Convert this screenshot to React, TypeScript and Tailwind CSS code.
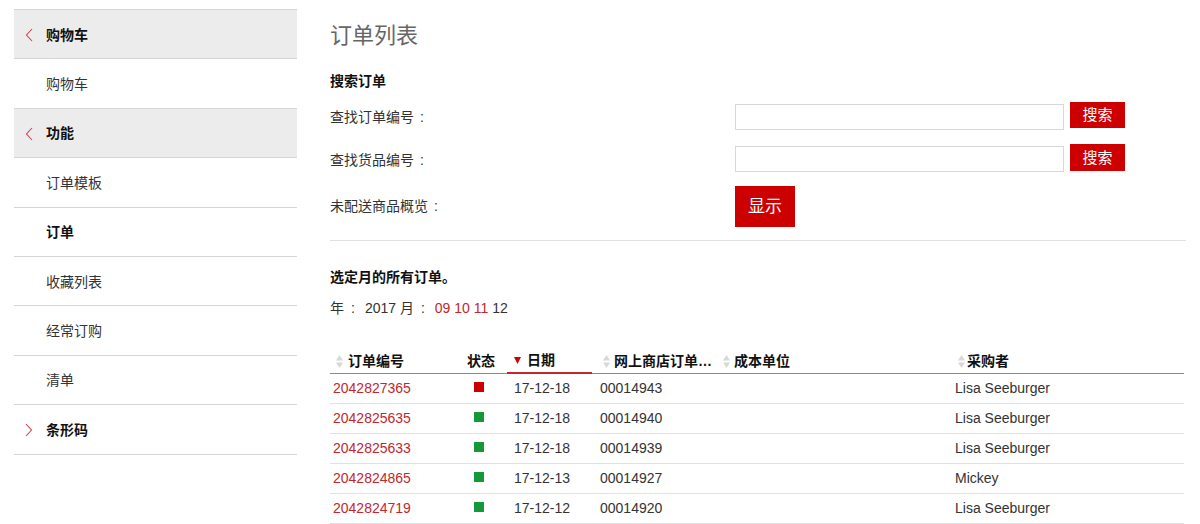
import React from "react";

const font = { fontFamily: '"Liberation Sans", Arial, "Noto Sans CJK SC", sans-serif' };

function Chevron({ dir }: { dir: "left" | "right" }) {
  return (
    <svg width="8" height="14" viewBox="0 0 8 14" className="shrink-0">
      {dir === "left" ? (
        <polyline points="7,1 1.5,7 7,13" fill="none" stroke="#c9444a" strokeWidth="1.1" />
      ) : (
        <polyline points="1,1 6.5,7 1,13" fill="none" stroke="#c9444a" strokeWidth="1.1" />
      )}
    </svg>
  );
}

function SortIcon() {
  return (
    <svg width="7" height="15" viewBox="0 0 7 15" className="shrink-0">
      <polygon points="3.5,1 7,6.5 0,6.5" fill="#d8d8d8" />
      <polygon points="0,8.5 7,8.5 3.5,14" fill="#d8d8d8" />
    </svg>
  );
}

function Colon() {
  return <span className="inline-block ml-[6px] mr-[2px]">:</span>;
}

function YColon() {
  return <span className="inline-block ml-[7px] mr-[10px]">:</span>;
}

const sidebar: { label: string; type: "head" | "item"; chevron?: "left" | "right"; bold?: boolean }[] = [
  { label: "购物车", type: "head", chevron: "left" },
  { label: "购物车", type: "item" },
  { label: "功能", type: "head", chevron: "left" },
  { label: "订单模板", type: "item" },
  { label: "订单", type: "item", bold: true },
  { label: "收藏列表", type: "item" },
  { label: "经常订购", type: "item" },
  { label: "清单", type: "item" },
  { label: "条形码", type: "head", chevron: "right" },
];

const rows = [
  { id: "2042827365", status: "red", date: "17-12-18", shop: "00014943", buyer: "Lisa Seeburger" },
  { id: "2042825635", status: "green", date: "17-12-18", shop: "00014940", buyer: "Lisa Seeburger" },
  { id: "2042825633", status: "green", date: "17-12-18", shop: "00014939", buyer: "Lisa Seeburger" },
  { id: "2042824865", status: "green", date: "17-12-13", shop: "00014927", buyer: "Mickey" },
  { id: "2042824719", status: "green", date: "17-12-12", shop: "00014920", buyer: "Lisa Seeburger" },
];

const cols = "grid grid-cols-[132px_45px_85px_126px_232px_234px]";

export default function App() {
  return (
    <div style={font} className="w-[1200px] h-[524px] overflow-hidden bg-white text-[#222] text-[14px] flex pl-[14px]">
      <aside className="w-[283px] shrink-0 pt-[9px]">
        <div className="border-t border-[#d6d6d6]">
          {sidebar.map((s, i) => (
            <div
              key={i}
              className={
                "h-[49.4px] border-b border-[#d6d6d6] flex items-center pt-[2px] " +
                (s.type === "head" && s.chevron === "left" ? "bg-[#ececec] " : "bg-white ")
              }
            >
              {s.chevron ? (
                <div className="w-[32px] flex justify-end pr-[13px]">
                  <Chevron dir={s.chevron} />
                </div>
              ) : (
                <div className="w-[32px]" />
              )}
              <span className={s.type === "head" || s.bold ? "font-bold text-[#111]" : "text-[#333]"}>{s.label}</span>
            </div>
          ))}
        </div>
      </aside>

      <main className="ml-[33px] w-[856px] shrink-0 pt-[21px]">
        <h1 className="text-[22px] leading-[30px] text-[#666]">订单列表</h1>
        <div className="mt-[20px] font-bold leading-[20px] text-[#111]">搜索订单</div>

        <div className="mt-[10px] flex items-center h-[28px]">
          <div className="w-[405px] pt-[5px] text-[#333]">
            查找订单编号
            <Colon />
          </div>
          <div className="w-[329px] h-[26px] mt-[3px] border border-[#d8d8d8] bg-white" />
          <button className="ml-[6px] w-[55px] h-[26px] bg-[#cc0000] text-white text-[15px] leading-[26px] -mt-[1px]">搜索</button>
        </div>

        <div className="mt-[14px] flex items-center h-[28px]">
          <div className="w-[405px] pt-[6px] text-[#333]">
            查找货品编号
            <Colon />
          </div>
          <div className="w-[329px] h-[26px] mt-[3px] border border-[#d8d8d8] bg-white" />
          <button className="ml-[6px] w-[55px] h-[27px] bg-[#cc0000] text-white text-[15px] leading-[27px]">搜索</button>
        </div>

        <div className="mt-[15px] flex items-center h-[41px]">
          <div className="w-[405px] text-[#333]">
            未配送商品概览
            <Colon />
          </div>
          <button className="w-[60px] h-[41px] bg-[#cc0000] text-white text-[17px] leading-[41px]">显示</button>
        </div>

        <div className="mt-[13px] border-t border-[#e0e0e0]" />

        <div className="mt-[26px] font-bold leading-[20px] text-[#111]">选定月的所有订单。</div>
        <div className="mt-[11px] leading-[20px] text-[#333] whitespace-pre">
          年<YColon />2017 月<YColon />
          <span className="text-[#c0282d]">09</span> <span className="text-[#c0282d]">10</span>{" "}
          <span className="text-[#c0282d]">11</span> 12
        </div>

        <div className="mt-[31px] w-[854px]">
          <div className={cols + " h-[25px] border-b border-[#8a8a8a] font-bold text-[#111] items-center"}>
            <div className="flex items-center gap-[5px] pl-[6px] h-full">
              <SortIcon />
              <span>订单编号</span>
            </div>
            <div className="flex items-center pl-[5px] h-full">状态</div>
            <div className="flex items-center gap-[6px] pl-[7px] h-full border-b-2 border-[#c0282d] -mb-[1px]">
              <svg width="7" height="7" viewBox="0 0 7 7" className="shrink-0">
                <polygon points="0,0 7,0 3.5,7" fill="#cc0000" />
              </svg>
              <span>日期</span>
            </div>
            <div className="flex items-center gap-[4px] pl-[11px] h-full whitespace-nowrap">
              <SortIcon />
              <span>网上商店订单…</span>
            </div>
            <div className="flex items-center gap-[4px] pl-[5px] h-full">
              <SortIcon />
              <span>成本单位</span>
            </div>
            <div className="flex items-center gap-[2px] pl-[8px] h-full">
              <SortIcon />
              <span>采购者</span>
            </div>
          </div>
          {rows.map((r, i) => (
            <div key={i} className={cols + " h-[30px] items-center border-b border-[#e2e2e2] text-[#333]"}>
              <div className="pl-[3px] text-[#c0282d]">{r.id}</div>
              <div className="pl-[12px] flex items-center">
                <span className={"inline-block w-[10px] h-[10px] -mt-[4px] " + (r.status === "red" ? "bg-[#cc0000]" : "bg-[#14993a]")} />
              </div>
              <div className="pl-[7px]">{r.date}</div>
              <div className="pl-[8px]">{r.shop}</div>
              <div />
              <div className="pl-[5px]">{r.buyer}</div>
            </div>
          ))}
        </div>
      </main>
    </div>
  );
}
